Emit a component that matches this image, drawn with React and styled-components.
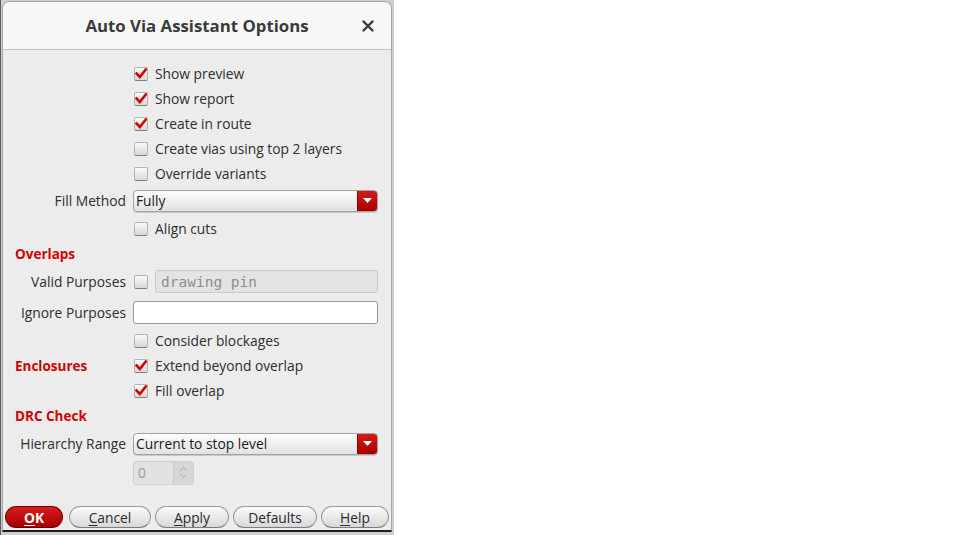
import React from 'react'
import styled, { createGlobalStyle } from 'styled-components'

const Global = createGlobalStyle`
  html, body {
    margin: 0;
    background: #ffffff;
  }
  body {
    font-family: "Open Sans", "Noto Sans", sans-serif;
    font-size: 13.8px;
    color: #2e2e2e;
  }
`

const Screen = styled.div`
  width: 394px;
  height: 535px;
  background: #cfcfcf;
  border-left: 1px solid #5a5a5a;
  box-sizing: border-box;
  display: flex;
`

const Dialog = styled.div`
  margin: 1px 0 3px 1px;
  width: 390px;
  display: flex;
  flex-direction: column;
  border: 1px solid #a6a6a6;
  border-bottom: 2px solid #1e1e1e;
  border-radius: 7px 7px 0 0;
  background: #ececec;
  box-sizing: border-box;
`

const TitleBar = styled.div`
  height: 47px;
  flex: none;
  display: flex;
  align-items: center;
  justify-content: center;
  position: relative;
  background: #f7f7f7;
  border-bottom: 1px solid #c2c2c2;
  border-radius: 7px 7px 0 0;
`

const Title = styled.div`
  font-size: 16.8px;
  font-weight: bold;
  color: #3a3a3a;
`

const Close = styled.div`
  position: absolute;
  right: 17px;
  top: 18px;
  width: 12px;
  height: 12px;
  display: flex;
`

const Body = styled.div`
  flex: 1;
  display: flex;
  flex-direction: column;
  padding-top: 11px;
`

const Form = styled.div`
  display: grid;
  grid-template-columns: 123px 245px;
  grid-template-rows: 25px 25px 25px 25px 25px 29px 27px 23px 33px 29px 27px 23px 27px 23px 33px 25px;
  column-gap: 7px;
`

const Label = styled.div`
  grid-column: 1;
  display: flex;
  align-items: center;
  justify-content: flex-end;
  white-space: nowrap;
  color: #2e2e2e;
`

const Section = styled.div`
  grid-column: 1;
  display: flex;
  align-items: center;
  padding-left: 12px;
  font-size: 13.5px;
  font-weight: bold;
  color: #d20000;
`

const Cell = styled.div`
  grid-column: 2;
  display: flex;
  align-items: center;
  gap: 7px;
  white-space: nowrap;
`

const Box = styled.span`
  width: 14px;
  height: 14px;
  margin-left: 1px;
  flex: none;
  box-sizing: border-box;
  border: 1px solid #b4b4b4;
  border-bottom-color: #7e7e7e;
  border-radius: 2px;
  background: linear-gradient(#fafafa, #d8d8d8);
  display: flex;
  align-items: center;
  justify-content: center;
`

const Select = styled.div`
  flex: 1;
  height: 22px;
  display: flex;
  align-items: stretch;
  box-sizing: border-box;
  border: 1px solid #a2a2a2;
  border-radius: 4px;
  background: linear-gradient(#fdfdfd, #e2e2e2);
  box-shadow: 0 1px 0 rgba(0, 0, 0, 0.14);
  overflow: hidden;
`

const SelectText = styled.span`
  flex: 1;
  display: flex;
  align-items: center;
  padding-left: 2px;
  color: #1a1a1a;
`

const SelectArrow = styled.span`
  width: 19px;
  flex: none;
  display: flex;
  align-items: center;
  justify-content: center;
  background: linear-gradient(#d61a1a, #a80000);
  border-left: 1px solid #8a0000;
`

const TextField = styled.div`
  flex: 1;
  height: 23px;
  box-sizing: border-box;
  border: 1px solid ${p => (p.disabled ? '#cacaca' : '#9a9a9a')};
  border-radius: 3px;
  background: ${p => (p.disabled ? '#e3e3e3' : '#ffffff')};
  display: flex;
  align-items: center;
  padding-left: 5px;
  font-family: "DejaVu Sans Mono", "Liberation Mono", monospace;
  font-size: 14.5px;
  color: #8e8e8e;
`

const Spin = styled.div`
  width: 61px;
  height: 24px;
  display: flex;
  box-sizing: border-box;
  border: 1px solid #d0d0d0;
  border-radius: 3px;
  background: #e1e1e1;
`

const SpinValue = styled.span`
  flex: 1;
  display: flex;
  align-items: center;
  padding-left: 4px;
  color: #9a9a9a;
`

const SpinArrows = styled.span`
  width: 19px;
  display: flex;
  flex-direction: column;
  align-items: center;
  justify-content: center;
  gap: 3px;
  background: #d6d6d6;
  border-left: 1px solid #cacaca;
`

const Footer = styled.div`
  margin-top: auto;
  display: flex;
  gap: 4px;
  padding: 0 0 2px 2px;
`

const Button = styled.div`
  width: ${p => p.w}px;
  height: 22px;
  box-sizing: border-box;
  border-radius: 11px;
  display: flex;
  align-items: center;
  justify-content: center;
  border: 1px solid ${p => (p.primary ? '#7a0000' : '#9c9c9c')};
  border-bottom-color: ${p => (p.primary ? '#5a0000' : '#7c7c7c')};
  color: ${p => (p.primary ? '#ffffff' : '#2a2a2a')};
  font-weight: ${p => (p.primary ? 'bold' : 'normal')};
  background: ${p =>
    p.primary
      ? 'linear-gradient(#d81c1c, #a80000)'
      : 'linear-gradient(#fbfbfb, #d8d8d8)'};
  margin-right: ${p => (p.primary ? 2 : 0)}px;

  u {
    text-decoration-thickness: 1px;
    text-underline-offset: 2px;
  }
`

const Tick = () => (
  <svg width="12" height="11" viewBox="0 0 12 11">
    <path d="M1.5 5.5 L4.8 9 L10.8 1.5" fill="none" stroke="#d40000" strokeWidth="2.6" strokeLinecap="square" />
  </svg>
)

const Check = ({ checked, children }) => (
  <>
    <Box>{checked && <Tick />}</Box>
    {children && <span>{children}</span>}
  </>
)

const Arrow = () => (
  <svg width="9" height="5" viewBox="0 0 9 5">
    <path d="M0 0 H9 L4.5 5 Z" fill="#ffffff" />
  </svg>
)

const Dropdown = ({ value }) => (
  <Select>
    <SelectText>{value}</SelectText>
    <SelectArrow><Arrow /></SelectArrow>
  </Select>
)

const App = () => (
  <>
    <Global />
    <Screen>
      <Dialog>
        <TitleBar>
          <Title>Auto Via Assistant Options</Title>
          <Close>
            <svg width="12" height="12" viewBox="0 0 12 12">
              <path d="M1.5 1.5 L10.5 10.5 M10.5 1.5 L1.5 10.5" stroke="#3a3a3a" strokeWidth="2.4" strokeLinecap="round" />
            </svg>
          </Close>
        </TitleBar>
        <Body>
          <Form>
            <Cell style={{ gridRow: 1 }}><Check checked>Show preview</Check></Cell>
            <Cell style={{ gridRow: 2 }}><Check checked>Show report</Check></Cell>
            <Cell style={{ gridRow: 3 }}><Check checked>Create in route</Check></Cell>
            <Cell style={{ gridRow: 4 }}><Check>Create vias using top 2 layers</Check></Cell>
            <Cell style={{ gridRow: 5 }}><Check>Override variants</Check></Cell>

            <Label style={{ gridRow: 6 }}>Fill Method</Label>
            <Cell style={{ gridRow: 6 }}><Dropdown value="Fully" /></Cell>

            <Cell style={{ gridRow: 7 }}><Check>Align cuts</Check></Cell>

            <Section style={{ gridRow: 8 }}>Overlaps</Section>

            <Label style={{ gridRow: 9 }}>Valid Purposes</Label>
            <Cell style={{ gridRow: 9 }}>
              <Check />
              <TextField disabled>drawing pin</TextField>
            </Cell>

            <Label style={{ gridRow: 10 }}>Ignore Purposes</Label>
            <Cell style={{ gridRow: 10 }}><TextField /></Cell>

            <Cell style={{ gridRow: 11 }}><Check>Consider blockages</Check></Cell>

            <Section style={{ gridRow: 12 }}>Enclosures</Section>
            <Cell style={{ gridRow: 12 }}><Check checked>Extend beyond overlap</Check></Cell>
            <Cell style={{ gridRow: 13 }}><Check checked>Fill overlap</Check></Cell>

            <Section style={{ gridRow: 14 }}>DRC Check</Section>

            <Label style={{ gridRow: 15 }}>Hierarchy Range</Label>
            <Cell style={{ gridRow: 15 }}><Dropdown value="Current to stop level" /></Cell>

            <Cell style={{ gridRow: 16 }}>
              <Spin>
                <SpinValue>0</SpinValue>
                <SpinArrows>
                  <svg width="7" height="4" viewBox="0 0 7 4"><path d="M0.5 3.5 L3.5 0.5 L6.5 3.5" fill="none" stroke="#a8a8a8" strokeWidth="1" /></svg>
                  <svg width="7" height="4" viewBox="0 0 7 4"><path d="M0.5 0.5 L3.5 3.5 L6.5 0.5" fill="none" stroke="#a8a8a8" strokeWidth="1" /></svg>
                </SpinArrows>
              </Spin>
            </Cell>
          </Form>
          <Footer>
            <Button primary w={58}><u>O</u>K</Button>
            <Button w={82}><u>C</u>ancel</Button>
            <Button w={74}><u>A</u>pply</Button>
            <Button w={84}>Defaults</Button>
            <Button w={68}><u>H</u>elp</Button>
          </Footer>
        </Body>
      </Dialog>
    </Screen>
  </>
)

export default App
